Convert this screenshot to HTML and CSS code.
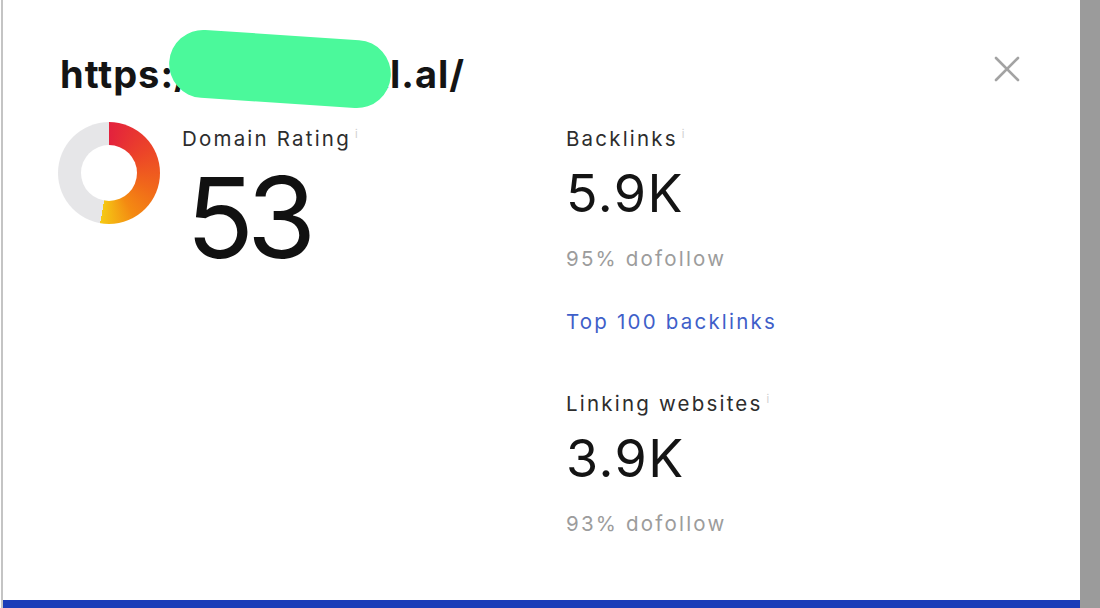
FILE: index.html
```html
<!DOCTYPE html>
<html lang="en">
<head>
<meta charset="utf-8">
<title>Site overview</title>
<link rel="stylesheet" href="styles.css">
</head>
<body>
<div class="screen">
  <div class="panel">
    <div class="content">
      <div class="header">
        <div class="title-wrap">
          <h1 class="title">https://xxxxxxxxl.al/</h1>
          <span class="redact" aria-hidden="true"></span>
        </div>
        <button class="close" aria-label="Close">
          <svg viewBox="0 0 26 26" width="26" height="26"><path d="M2 2 L24 24 M24 2 L2 24" stroke="#a3a3a3" stroke-width="2.6" stroke-linecap="round" fill="none"/></svg>
        </button>
      </div>
      <div class="metrics">
        <div class="dr">
          <div class="donut"><div class="hole"></div></div>
          <div class="dr-text">
            <div class="label">Domain Rating<span class="info">i</span></div>
            <div class="big">53</div>
          </div>
        </div>
        <div class="stats">
          <div class="label">Backlinks<span class="info">i</span></div>
          <div class="value">5.9K</div>
          <div class="sub">95% dofollow</div>
          <a class="link" href="#">Top 100 backlinks</a>
          <div class="label gap-l">Linking websites<span class="info">i</span></div>
          <div class="value">3.9K</div>
          <div class="sub">93% dofollow</div>
        </div>
      </div>
    </div>
    <div class="bottom-bar"></div>
  </div>
  <div class="side"></div>
</div>
</body>
</html>
```
FILE: styles.css
```css
* { box-sizing: border-box; }
html, body { margin: 0; padding: 0; height: 100%; }
body {
  background: #ffffff;
  font-family: Inter, "Noto Sans", sans-serif;
  color: #222;
}
.screen {
  display: flex;
  height: 608px;
  padding-left: 1px;
}
.panel {
  flex: 1;
  display: flex;
  flex-direction: column;
  border-left: 2px solid #c4c4c4;
  background: #fff;
}
.side {
  width: 20px;
  background: #9b9b9b;
}
.content {
  flex: 1;
  padding: 52px 60px 0 55px;
}
.bottom-bar {
  height: 8px;
  background: #1b3db8;
}
.header {
  display: flex;
  justify-content: space-between;
  align-items: flex-start;
}
.title-wrap { position: relative; padding-left: 2px; }
.title {
  margin: 0;
  font-size: 38px;
  line-height: 44px;
  font-weight: 700;
  color: #141414;
  letter-spacing: 1px;
}
.redact {
  position: absolute;
  left: 111px;
  top: -17px;
  width: 222px;
  height: 68px;
  border-radius: 34px;
  background: #4bf99b;
  transform: rotate(3.8deg);
}
.close {
  border: 0;
  background: transparent;
  padding: 0;
  margin-top: 4px;
  width: 26px;
  height: 26px;
  cursor: pointer;
}
.close svg { display: block; }
.metrics {
  margin-top: 31px;
  display: grid;
  grid-template-columns: 508px 1fr;
}
.dr {
  display: flex;
  align-items: flex-start;
  gap: 22px;
}
.donut {
  margin-top: -5px;
  width: 102px;
  height: 102px;
  border-radius: 50%;
  background: conic-gradient(from 0deg, #e3213d 0deg, #ec4528 60deg, #f1681a 110deg, #f48a12 150deg, #f5c914 190deg, #e6e6e8 190deg, #e6e6e8 360deg);
  display: flex;
  align-items: center;
  justify-content: center;
}
.hole {
  width: 56px;
  height: 56px;
  border-radius: 50%;
  background: #fff;
}
.label {
  font-size: 20.5px;
  line-height: 24px;
  color: #2d2d2d;
  letter-spacing: 2.2px;
}
.info {
  display: inline-block;
  margin-left: 4px;
  font-size: 11px;
  line-height: 11px;
  color: #d0d0d0;
  vertical-align: top;
  margin-top: 2px;
  letter-spacing: 0;
}
.big {
  margin-top: 10px;
  font-size: 112px;
  line-height: 112px;
  color: #111;
  letter-spacing: -7px;
  margin-left: 4px;
}
.stats { display: flex; flex-direction: column; align-items: flex-start; }
.value {
  margin-top: 13px;
  font-size: 52px;
  line-height: 60px;
  color: #141414;
  letter-spacing: 1.5px;
}
.sub {
  margin-top: 23px;
  font-size: 20.5px;
  line-height: 24px;
  color: #9c9c9c;
  letter-spacing: 2.2px;
}
.link {
  margin-top: 39px;
  font-size: 20.5px;
  line-height: 24px;
  color: #3f5fc9;
  text-decoration: none;
  letter-spacing: 2.2px;
}
.gap-l { margin-top: 58px; }
```
